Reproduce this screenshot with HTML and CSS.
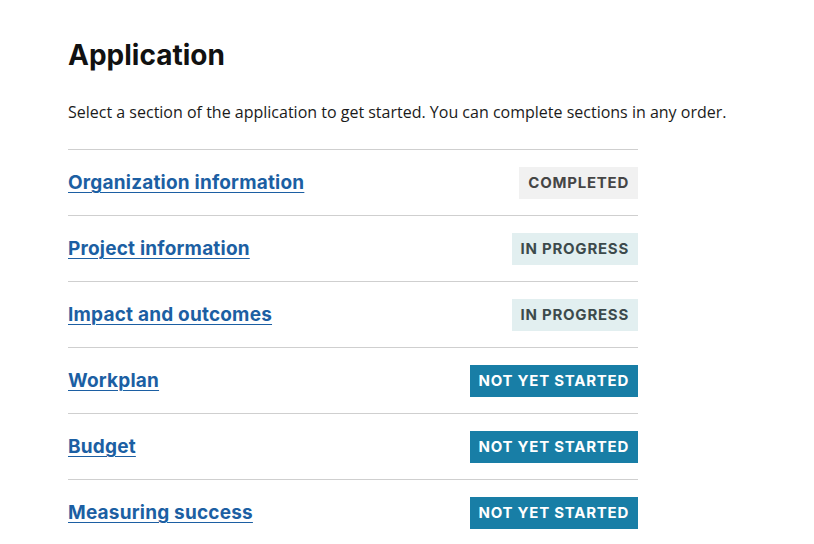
FILE: index.html
```html
<!DOCTYPE html>
<html>
<head>
<meta charset="utf-8">
<link rel="stylesheet" href="styles.css">
</head>
<body>
<main class="page">
  <h1 class="title">Application</h1>
  <p class="intro">Select a section of the application to get started. You can complete sections in any order.</p>
  <ul class="sections">
    <li class="row"><a class="link" href="#">Organization information</a><span class="badge done">COMPLETED</span></li>
    <li class="row"><a class="link" href="#">Project information</a><span class="badge progress">IN PROGRESS</span></li>
    <li class="row"><a class="link" href="#">Impact and outcomes</a><span class="badge progress">IN PROGRESS</span></li>
    <li class="row"><a class="link" href="#">Workplan</a><span class="badge todo">NOT YET STARTED</span></li>
    <li class="row"><a class="link" href="#">Budget</a><span class="badge todo">NOT YET STARTED</span></li>
    <li class="row"><a class="link" href="#">Measuring success</a><span class="badge todo">NOT YET STARTED</span></li>
  </ul>
</main>
</body>
</html>
```
FILE: styles.css
```css
html, body { margin: 0; padding: 0; background: #fff; }
.page { padding: 36px 0 0 68px; width: 570px; }
.title {
  font-family: "Inter", "Liberation Sans", sans-serif;
  font-weight: 700;
  font-size: 28px;
  line-height: 38px;
  margin: 0;
  color: #111;
}
.intro {
  font-family: "Open Sans", "Liberation Sans", sans-serif;
  font-size: 16px;
  line-height: 24px;
  color: #1b1b1b;
  margin: 26px 0 0 0;
  white-space: nowrap;
}
.sections { list-style: none; margin: 25px 0 0 0; padding: 0; }
.row {
  height: 65px;
  border-top: 1px solid #cfcfcf;
  display: flex;
  align-items: center;
  justify-content: space-between;
}
.link {
  font-family: "Inter", "Liberation Sans", sans-serif;
  font-weight: 700;
  font-size: 19px;
  letter-spacing: 0.2px;
  color: #1c5fa3;
  text-decoration: underline;
  text-decoration-thickness: 1px;
  text-underline-offset: 3px;
}
.badge {
  font-family: "Inter", "Liberation Sans", sans-serif;
  font-weight: 700;
  font-size: 15px;
  letter-spacing: 0.75px;
  height: 32px;
  line-height: 32px;
  padding: 0 9px;
}
.done { background: #f1f1f1; color: #454545; }
.progress { background: #e2eff0; color: #3c4a4c; }
.todo { background: #187ea6; color: #fff; }
```
